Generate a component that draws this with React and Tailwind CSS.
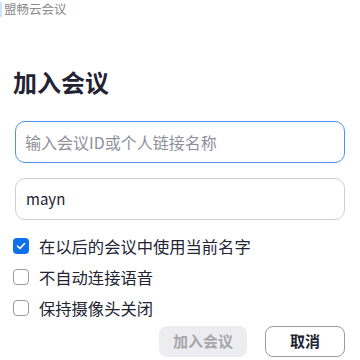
import React from 'react'

const font = { fontFamily: '"Noto Sans CJK SC", "Noto Sans", sans-serif' }

function Check({ checked }) {
    if (checked) {
        return (
            <span className="w-4 h-4 rounded-[4px] bg-[#0e71eb] flex items-center justify-center shrink-0">
                <svg width="10" height="8" viewBox="0 0 10 8" fill="none">
                    <path d="M1.5 4.2 L4 6.5 L8.5 1.5" stroke="white" strokeWidth="1.6" strokeLinecap="round" strokeLinejoin="round" />
                </svg>
            </span>
        )
    }
    return <span className="w-4 h-4 rounded-[4px] border border-[#9a9aa3] bg-white shrink-0"></span>
}

export default function App() {
    const options = [
        { label: '在以后的会议中使用当前名字', checked: true },
        { label: '不自动连接语音', checked: false },
        { label: '保持摄像头关闭', checked: false },
    ]

    return (
        <div className="w-[360px] h-[360px] bg-white relative overflow-hidden" style={font}>
            <div className="absolute left-0 top-[2px] w-[2px] h-[15px] bg-[#cfe3fb]"></div>
            {/* Title bar */}
            <div className="h-[19px] pl-[4px] text-[12.5px] leading-[18px] text-[#8a8a8f]">盟畅云会议</div>

            <div className="px-[15px]">
                <h1 className="mt-[46px] ml-[-2px] h-[34px] text-[24px] leading-[34px] font-bold text-[#232333]">加入会议</h1>

                <div className="mt-[22px] h-[42px] rounded-[10px] border-[1.5px] border-[#4a90f5] flex items-center px-[9px] text-[16px] text-[#8f8f99]">
                    输入会议ID或个人链接名称
                </div>

                <div className="mt-[15px] h-[42px] rounded-[10px] border border-[#cdcdd4] flex items-center px-[10px] text-[15px] text-[#232333]">
                    mayn
                </div>

                <div className="mt-[10px] ml-[-2px] flex flex-col">
                    {options.map((o, i) => (
                        <div key={i} className="flex items-center gap-[10px] h-[31px]">
                            <Check checked={o.checked} />
                            <span className="text-[16.3px] leading-[20px] text-[#232333]">{o.label}</span>
                        </div>
                    ))}
                </div>

                <div className="mt-[3px] flex justify-end gap-[18px]">
                    <button className="w-[88px] h-[31px] rounded-[8px] bg-[#ededf1] text-[15px] font-semibold text-[#a6a6ad]">加入会议</button>
                    <button className="w-[80px] h-[31px] rounded-[8px] border border-[#9a9aa3] bg-white text-[15px] font-semibold text-[#232333]">取消</button>
                </div>
            </div>
        </div>
    )
}
